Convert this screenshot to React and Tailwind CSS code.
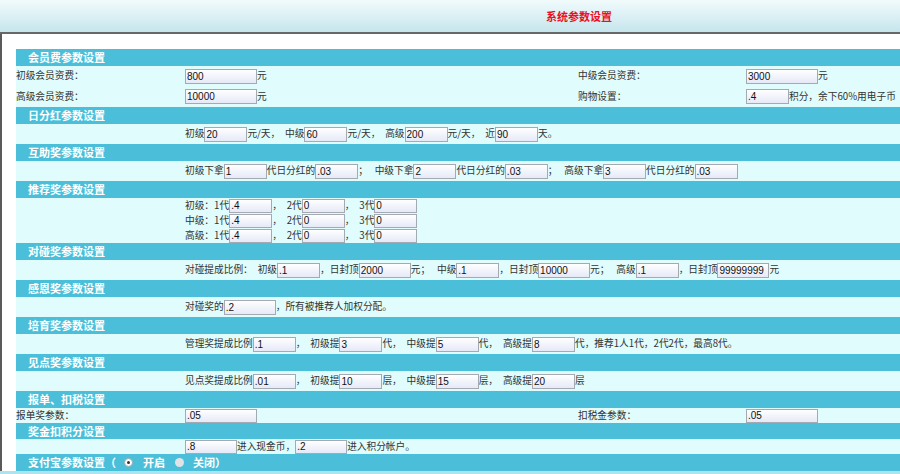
import React from 'react'

const S = '\u2002'
const SS = '\u2002\u2009'

function Inp({ v, w = 'w-[43px]', h = 'h-[15px]' }) {
  return (
    <input
      readOnly
      value={v}
      className={`${w} ${h} shrink-0 border border-[#a3aab2] bg-linear-to-b from-white to-[#e6e9f7] px-[1px] font-['Liberation_Sans',Arial,sans-serif] text-[10px] leading-none text-[#111] outline-none`}
    />
  )
}

function T({ children }) {
  return <span className="whitespace-pre">{children}</span>
}

function Head({ children, h = 'h-[17px]' }) {
  return (
    <div className={`${h} flex items-center bg-[#4bbfd9] pl-[12px] text-[11px] font-bold leading-none text-white`}>
      {children}
    </div>
  )
}

// 一行内容从 x=185 开始
function Row({ children, h = 'h-[20px]' }) {
  return <div className={`${h} flex items-center bg-[#e0fcfc] pl-[169px] leading-none whitespace-nowrap`}>{children}</div>
}

function Radio({ on }) {
  return on ? (
    <span className="inline-flex h-[9px] w-[9px] items-center justify-center rounded-full border border-[#9aa] bg-white">
      <span className="h-[3px] w-[3px] rounded-full bg-[#333]" />
    </span>
  ) : (
    <span className="inline-block h-[9px] w-[9px] rounded-full bg-[#dfe3e6]" />
  )
}

export default function App() {
  return (
    <div className="w-[900px] h-[474px] overflow-hidden bg-white font-['Noto_Sans_CJK_SC',sans-serif] text-[9.7px] text-[#333]">
      <div className="h-[32px] flex items-center pl-[546px] bg-linear-to-b from-[#f1fbfc] to-[#c6e5ed]">
        <span className="text-[11px] font-bold text-[#ec1022]">系统参数设置</span>
      </div>
      <div className="h-[2px] bg-[#686868]" />

      <div className="h-[437px] border-l-2 border-[#5a5a5a] pl-[14px] pt-[15px]">
        <Head>会员费参数设置</Head>
        <div className="bg-[#e0fcfc] leading-none whitespace-nowrap">
          <div className="h-[20px] flex items-center">
            <div className="w-[169px]">初级会员资费：</div>
            <div className="w-[393px] flex items-center"><Inp v="800" w="w-[72px]" /><T>元</T></div>
            <div className="w-[168px]">中级会员资费：</div>
            <div className="flex items-center"><Inp v="3000" w="w-[72px]" /><T>元</T></div>
          </div>
          <div className="h-[21px] flex items-center">
            <div className="w-[169px]">高级会员资费：</div>
            <div className="w-[393px] flex items-center"><Inp v="10000" w="w-[72px]" /><T>元</T></div>
            <div className="w-[168px]">购物设置：</div>
            <div className="flex items-center"><Inp v=".4" /><T>积分，余下60%用电子币</T></div>
          </div>
        </div>

        <Head>日分红参数设置</Head>
        <Row>
          <T>初级</T><Inp v="20" /><T>{`元/天，${S}中级`}</T><Inp v="60" /><T>{`元/天，${S}高级`}</T><Inp v="200" />
          <T>{`元/天，${S}近`}</T><Inp v="90" /><T>天。</T>
        </Row>

        <Head>互助奖参数设置</Head>
        <Row>
          <T>初级下拿</T><Inp v="1" /><T>代日分红的</T><Inp v=".03" /><T>{`；${SS}中级下拿`}</T><Inp v="2" />
          <T>代日分红的</T><Inp v=".03" /><T>{`；${SS}高级下拿`}</T><Inp v="3" /><T>代日分红的</T><Inp v=".03" />
        </Row>

        <Head>推荐奖参数设置</Head>
        {['初级', '中级', '高级'].map((n) => (
          <Row key={n} h="h-[15px]">
            <T>{`${n}：1代`}</T><Inp v=".4" h="h-[14px]" /><T>{`，${S}2代`}</T><Inp v="0" h="h-[14px]" />
            <T>{`，${S}3代`}</T><Inp v="0" h="h-[14px]" />
          </Row>
        ))}

        <Head>对碰奖参数设置</Head>
        <Row>
          <T>{`对碰提成比例：${S}初级`}</T><Inp v=".1" /><T>，日封顶</T><Inp v="2000" w="w-[52px]" />
          <T>{`元；${SS}中级`}</T><Inp v=".1" /><T>，日封顶</T><Inp v="10000" w="w-[52px]" />
          <T>{`元；${SS}高级`}</T><Inp v=".1" /><T>，日封顶</T><Inp v="99999999" w="w-[52px]" /><T>元</T>
        </Row>

        <Head>感恩奖参数设置</Head>
        <Row>
          <T>对碰奖的</T><Inp v=".2" w="w-[52px]" /><T>，所有被推荐人加权分配。</T>
        </Row>

        <Head>培育奖参数设置</Head>
        <Row>
          <T>管理奖提成比例</T><Inp v=".1" /><T>{`，${S}初级提`}</T><Inp v="3" /><T>{`代，${S}中级提`}</T><Inp v="5" />
          <T>{`代，${S}高级提`}</T><Inp v="8" /><T>代，推荐1人1代，2代2代，最高8代。</T>
        </Row>

        <Head>见点奖参数设置</Head>
        <Row>
          <T>见点奖提成比例</T><Inp v=".01" /><T>{`，${S}初级提`}</T><Inp v="10" /><T>{`层，${S}中级提`}</T><Inp v="15" />
          <T>{`层，${S}高级提`}</T><Inp v="20" /><T>层</T>
        </Row>

        <Head>报单、扣税设置</Head>
        <div className="h-[15px] flex items-center bg-[#e0fcfc] leading-none whitespace-nowrap">
          <div className="w-[169px]">报单奖参数：</div>
          <div className="w-[393px] flex items-center"><Inp v=".05" w="w-[72px]" h="h-[14px]" /></div>
          <div className="w-[168px]">扣税金参数：</div>
          <div className="flex items-center"><Inp v=".05" w="w-[72px]" h="h-[14px]" /></div>
        </div>

        <Head h="h-[16px]">奖金扣积分设置</Head>
        <Row h="h-[15px]">
          <Inp v=".8" w="w-[52px]" h="h-[14px]" /><T>进入现金币，</T><Inp v=".2" w="w-[52px]" h="h-[14px]" /><T>进入积分帐户。</T>
        </Row>

        <Head>
          <span className="flex items-center gap-[8px]">
            <span>支付宝参数设置（</span>
            <Radio on />
            <span className="ml-[2px]">开启</span>
            <span className="ml-[2px]"><Radio /></span>
            <span className="ml-[1px]">关闭）</span>
          </span>
        </Head>
      </div>
      <div className="h-[3px] bg-[#abe3ef]" />
    </div>
  )
}
